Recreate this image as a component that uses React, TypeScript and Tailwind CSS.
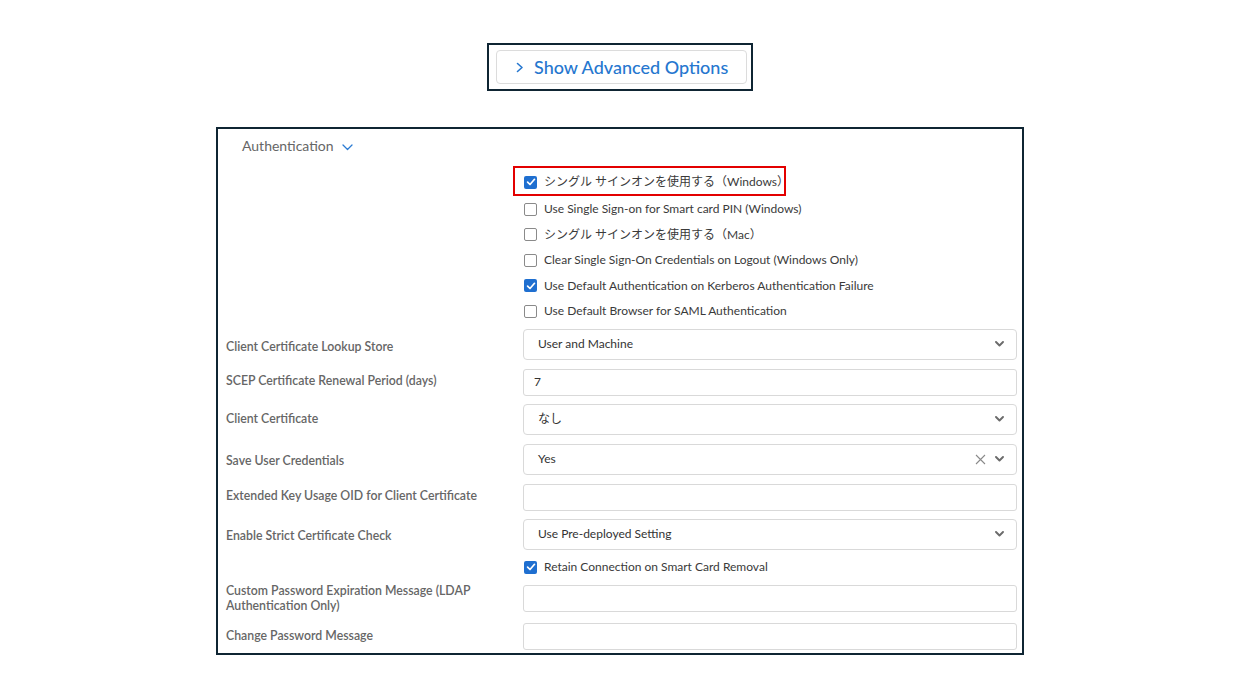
import React from "react";

const FONT = { fontFamily: 'Lato, "Noto Sans CJK JP", "Noto Sans", sans-serif' };

function Check({ checked }: { checked?: boolean }) {
  if (checked) {
    return (
      <span className="flex h-[13px] w-[13px] shrink-0 items-center justify-center rounded-[2px] bg-[#1f6fd0]">
        <svg width="10" height="10" viewBox="0 0 10 10">
          <polyline points="1.6,5.2 4,7.5 8.5,2.3" fill="none" stroke="#fff" strokeWidth="1.7" strokeLinecap="round" strokeLinejoin="round" />
        </svg>
      </span>
    );
  }
  return <span className="block h-[13px] w-[13px] shrink-0 rounded-[2px] border border-[#8a8a8a] bg-white" />;
}

function CheckRow({ label, checked, h }: { label: string; checked?: boolean; h: string }) {
  return (
    <div className={`flex items-center gap-[7px] pl-[1px] ${h}`}>
      <Check checked={checked} />
      <span className="text-[12px] leading-[16px] text-[#3a3a3a]">{label}</span>
    </div>
  );
}

function Chevron() {
  return (
    <svg width="9" height="6" viewBox="0 0 9 6">
      <polyline points="1,1 4.5,4.5 8,1" fill="none" stroke="#6b6b6b" strokeWidth="1.9" strokeLinecap="round" strokeLinejoin="round" />
    </svg>
  );
}

function SelectBox({ value, clear }: { value: string; clear?: boolean }) {
  return (
    <div className="flex h-[31px] w-[494px] shrink-0 items-center rounded-[4px] border border-[#d9d9d9] bg-white pl-[14px] pr-[12px]">
      <span className="flex-1 text-[12px] leading-[16px] text-[#333]">{value}</span>
      {clear && (
        <svg width="11" height="11" viewBox="0 0 11 11" className="mr-[9px]">
          <path d="M1 1 L10 10 M10 1 L1 10" stroke="#8a8a8a" strokeWidth="1.1" />
        </svg>
      )}
      <Chevron />
    </div>
  );
}

function TextBox({ value }: { value?: string }) {
  return (
    <div className="flex h-[27px] w-[494px] shrink-0 items-center rounded-[3px] border border-[#d9d9d9] bg-white pl-[10px]">
      <span className="text-[12px] leading-[16px] text-[#333]">{value}</span>
    </div>
  );
}

function FormRow({ label, children, mt, h, off }: { label: React.ReactNode; children: React.ReactNode; mt: string; h: string; off: string }) {
  return (
    <div className={`flex items-center ${mt} ${h}`}>
      <div className={`w-[305px] shrink-0 pl-[8px] pr-[20px] text-[12.3px] font-semibold leading-[15px] text-[#666] ${off}`}>
        {label}
      </div>
      {children}
    </div>
  );
}

export default function App() {
  return (
    <div className="min-h-[694px] w-full bg-white" style={FONT}>
      <div className="pt-[43px]">
        <div className="ml-[487px] flex h-[48px] w-[266px] items-center border-2 border-[#0f2533] pl-[7px]">
          <div className="flex h-[34px] w-[251px] items-center rounded-[4px] border border-[#dcdcdc] bg-white pl-[19px]">
            <svg width="8" height="11" viewBox="0 0 8 11" className="mr-[10px] mt-[1px]">
              <polyline points="1.5,1.5 6,5.5 1.5,9.5" fill="none" stroke="#2677cf" strokeWidth="1.6" strokeLinecap="round" strokeLinejoin="round" />
            </svg>
            <span className="text-[18px] font-medium leading-[22px] text-[#2677cf]">Show Advanced Options</span>
          </div>
        </div>
      </div>

      <div className="ml-[216px] mt-[36px] w-[808px] border-2 border-[#0f2533] bg-white pb-[3px]">
        <div className="h-[37px] pl-[24px] pt-[7px]">
          <div className="flex items-center gap-[8px]">
            <span className="text-[14px] leading-[20px] text-[#666]">Authentication</span>
            <svg width="11" height="7" viewBox="0 0 11 7" className="mt-[3px]">
              <polyline points="1,1 5.5,5.5 10,1" fill="none" stroke="#2b7bd3" strokeWidth="1.3" strokeLinecap="round" strokeLinejoin="round" />
            </svg>
          </div>
        </div>

        <div className="pl-[305px]">
          <div className="h-[30px]">
            <div className="-ml-[10px] flex h-[30px] w-[273px] items-center gap-[7px] border-2 border-[#e30000] pl-[9px] pt-[2px]">
              <Check checked />
              <span className="text-[12px] leading-[16px] text-[#3a3a3a]">シングル サインオンを使用する（Windows）</span>
            </div>
          </div>
          <CheckRow h="h-[26px]" label="Use Single Sign-on for Smart card PIN (Windows)" />
          <CheckRow h="h-[25.5px]" label="シングル サインオンを使用する（Mac）" />
          <CheckRow h="h-[25.5px]" label="Clear Single Sign-On Credentials on Logout (Windows Only)" />
          <CheckRow h="h-[25.5px]" label="Use Default Authentication on Kerberos Authentication Failure" checked />
          <CheckRow h="h-[25.5px]" label="Use Default Browser for SAML Authentication" />
        </div>

        <FormRow mt="mt-[4.5px]" h="h-[31px]" off="pt-[4px]" label="Client Certificate Lookup Store">
          <SelectBox value="User and Machine" />
        </FormRow>
        <FormRow mt="mt-[9px]" h="h-[27px]" off="pb-[3px]" label="SCEP Certificate Renewal Period (days)">
          <TextBox value="7" />
        </FormRow>
        <FormRow mt="mt-[8px]" h="h-[31px]" off="pb-[1px]" label="Client Certificate">
          <SelectBox value="なし" />
        </FormRow>
        <FormRow mt="mt-[9px]" h="h-[31px]" off="pt-[3px]" label="Save User Credentials">
          <SelectBox value="Yes" clear />
        </FormRow>
        <FormRow mt="mt-[9px]" h="h-[27px]" off="pb-[3px]" label="Extended Key Usage OID for Client Certificate">
          <TextBox />
        </FormRow>
        <FormRow mt="mt-[8px]" h="h-[31px]" off="pt-[3px]" label="Enable Strict Certificate Check">
          <SelectBox value="Use Pre-deployed Setting" />
        </FormRow>
        <div className="pl-[305px]">
          <CheckRow h="h-[35px]" label="Retain Connection on Smart Card Removal" checked />
        </div>
        <FormRow mt="mt-0" h="h-[27px]" off="" label="Custom Password Expiration Message (LDAP Authentication Only)">
          <TextBox />
        </FormRow>
        <FormRow mt="mt-[11px]" h="h-[27px]" off="pb-[1px]" label="Change Password Message">
          <TextBox />
        </FormRow>
      </div>
    </div>
  );
}
